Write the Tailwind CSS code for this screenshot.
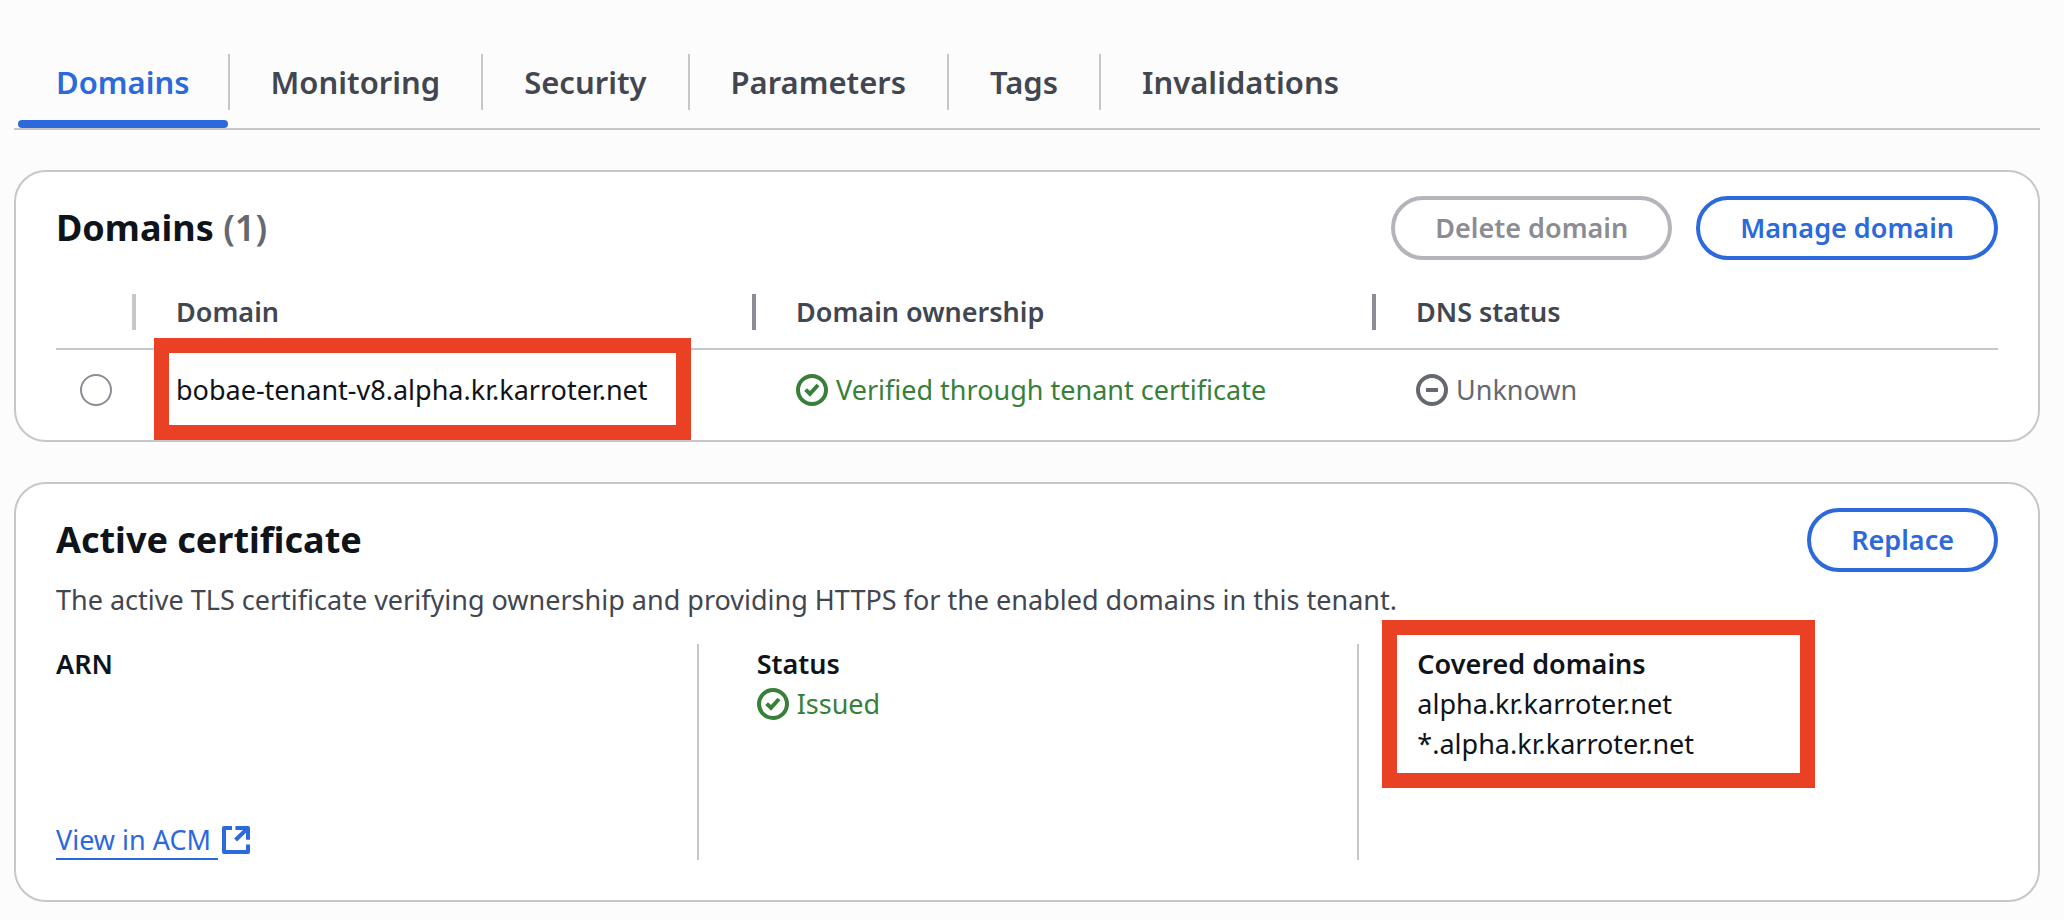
<!DOCTYPE html>
<html lang="en">

<head>
    <meta charset="UTF-8">
    <title>Domains</title>
    <script src="https://cdn.jsdelivr.net/npm/@tailwindcss/browser@4"></script>
</head>

<body class="bg-[#fcfcfc] font-['Noto_Sans',sans-serif] text-[27px] leading-10 text-[#0f141a] pl-[14px] pr-6 pt-[54px] pb-4">
    <!-- Tabs -->
    <nav class="flex border-b-2 border-[#c6c6cd] pl-1 text-[31px] font-semibold text-[#424650]">
        <a href="#" class="relative h-[74px] px-[38px] text-[#2c69da]">
            <span class="block py-2">Domains</span>
            <span class="absolute inset-x-0 bottom-0 h-2 rounded-full bg-[#2c69da]"></span>
        </a>
        <a href="#" class="h-14 border-l-2 border-[#c6c6cd] px-[41px] py-2">Monitoring</a>
        <a href="#" class="h-14 border-l-2 border-[#c6c6cd] px-[41px] py-2">Security</a>
        <a href="#" class="h-14 border-l-2 border-[#c6c6cd] px-[41px] py-2">Parameters</a>
        <a href="#" class="h-14 border-l-2 border-[#c6c6cd] px-[41px] py-2">Tags</a>
        <a href="#" class="h-14 border-l-2 border-[#c6c6cd] px-[41px] py-2">Invalidations</a>
    </nav>

    <main class="mt-10 space-y-10">
        <!-- Domains -->
        <section class="rounded-[32px] border-2 border-[#c6c6cd] bg-white px-10 pt-6">
            <div class="flex items-center justify-between">
                <h2 class="text-[36px] font-bold">Domains <span class="font-semibold text-[#656871]">(1)</span></h2>
                <div class="flex gap-6 font-semibold">
                    <button disabled class="h-16 rounded-full border-4 border-[#b4b4bb] px-10 text-[#8c8c94]">Delete domain</button>
                    <button class="h-16 rounded-full border-4 border-[#2c69da] px-10 text-[#2c69da]">Manage domain</button>
                </div>
            </div>
            <table class="mt-[15px] w-full table-fixed text-left">
                <thead>
                    <tr class="h-[74px] border-b-2 border-[#c6c6cd] text-[#424650]">
                        <th class="w-[76px]"></th>
                        <th class="w-[620px] font-semibold"><div class="flex h-9 items-center border-l-4 border-[#c6c6cd] pl-10">Domain</div></th>
                        <th class="w-[620px] font-semibold"><div class="flex h-9 items-center border-l-4 border-[#8c8c94] pl-10">Domain ownership</div></th>
                        <th class="font-semibold"><div class="flex h-9 items-center border-l-4 border-[#8c8c94] pl-10">DNS status</div></th>
                    </tr>
                </thead>
                <tbody>
                    <tr class="h-[91px]">
                        <td class="pb-2.5 pl-6">
                            <input type="radio" name="domain" aria-label="Select bobae-tenant-v8.alpha.kr.karroter.net" class="block size-8 appearance-none rounded-full border-2 border-[#8c8c94]">
                        </td>
                        <td class="relative pb-2.5 pl-11">
                            <span class="whitespace-nowrap">bobae-tenant-v8.alpha.kr.karroter.net</span>
                            <span class="absolute -top-3 left-[22px] h-[102px] w-[537px] border-[15px] border-[#ea4024]"></span>
                        </td>
                        <td class="pb-2.5 pl-11">
                            <div class="flex items-center gap-2 whitespace-nowrap text-[#38803a]">
                                <svg class="size-8" viewBox="0 0 16 16" fill="none" stroke="currentColor" stroke-width="2"><circle cx="8" cy="8" r="7" /><path d="m4.8 7.8 2.2 2.1 4-4.4" /></svg>
                                Verified through tenant certificate
                            </div>
                        </td>
                        <td class="pb-2.5 pl-11">
                            <div class="flex items-center gap-2 text-[#656871]">
                                <svg class="size-8" viewBox="0 0 16 16" fill="none" stroke="currentColor" stroke-width="2"><circle cx="8" cy="8" r="7" /><path d="M5 8h6" /></svg>
                                Unknown
                            </div>
                        </td>
                    </tr>
                </tbody>
            </table>
        </section>

        <!-- Active certificate -->
        <section class="rounded-[32px] border-2 border-[#c6c6cd] bg-white px-10 pt-6 pb-10">
            <div class="flex items-center justify-between">
                <h2 class="text-[36px] font-bold">Active certificate</h2>
                <button class="h-16 rounded-full border-4 border-[#2c69da] px-10 font-semibold text-[#2c69da]">Replace</button>
            </div>
            <p class="mt-2 text-[#424650]">The active TLS certificate verifying ownership and providing HTTPS for the enabled domains in this tenant.</p>
            <div class="-mx-5 mt-6 grid h-[216px] grid-cols-3">
                <div class="flex flex-col justify-between pl-5">
                    <h3 class="font-semibold">ARN</h3>
                    <a href="#" class="flex items-center gap-1 text-[#2c69da]">
                        <span class="whitespace-pre underline decoration-2 underline-offset-8">View in ACM </span>
                        <svg class="size-7" viewBox="0 0 14 14" fill="none" stroke="currentColor" stroke-width="2" stroke-linejoin="round"><path d="M5 1H1v12h12V9.2M6.7 1H13v5.9M13 1 6.8 7" /></svg>
                    </a>
                </div>
                <div class="border-l-2 border-[#c6c6cd] pl-[58px]">
                    <h3 class="font-semibold">Status</h3>
                    <div class="flex items-center gap-2 text-[#38803a]">
                        <svg class="size-8" viewBox="0 0 16 16" fill="none" stroke="currentColor" stroke-width="2"><circle cx="8" cy="8" r="7" /><path d="m4.8 7.8 2.2 2.1 4-4.4" /></svg>
                        Issued
                    </div>
                </div>
                <div class="relative border-l-2 border-[#c6c6cd] pl-[58px]">
                    <h3 class="font-semibold">Covered domains</h3>
                    <p>alpha.kr.karroter.net</p>
                    <p>*.alpha.kr.karroter.net</p>
                    <span class="absolute -top-6 left-[23px] h-[168px] w-[433px] border-[15px] border-[#ea4024]"></span>
                </div>
            </div>
        </section>
    </main>
</body>

</html>
